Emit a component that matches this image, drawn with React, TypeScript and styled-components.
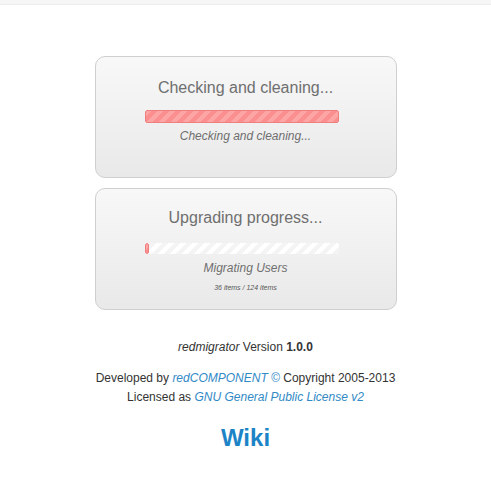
import React from "react";
import styled, { createGlobalStyle } from "styled-components";

const GlobalStyle = createGlobalStyle`
  body {
    margin: 0;
    background: #fff;
    font-family: "Liberation Sans", Arial, sans-serif;
  }
`;

const TopStrip = styled.div`
  height: 4px;
  background: #f6f6f6;
  border-bottom: 1px solid #ececec;
`;

const Page = styled.div`
  display: flex;
  flex-direction: column;
  align-items: center;
  padding-top: 51px;
`;

const Panel = styled.div<{ $top: number }>`
  box-sizing: border-box;
  width: 302px;
  height: 122px;
  margin-bottom: 10px;
  padding-top: ${(p) => p.$top}px;
  border: 1px solid #cfcfcf;
  border-radius: 10px;
  background: linear-gradient(to bottom, #f8f8f8, #e9e9e9);
  display: flex;
  flex-direction: column;
  align-items: center;
`;

const Title = styled.div`
  font-size: 16px;
  line-height: 20px;
  color: #6f6f6f;
`;

const Bar = styled.div<{ $h: number; $gap: number }>`
  box-sizing: border-box;
  width: 194px;
  height: ${(p) => p.$h}px;
  margin-top: ${(p) => p.$gap}px;
  margin-right: 7px;
  border-radius: 2px;
  background-color: #f4f4f4;
  background-image: linear-gradient(
    135deg,
    #ffffff 25%,
    transparent 25%,
    transparent 50%,
    #ffffff 50%,
    #ffffff 75%,
    transparent 75%,
    transparent
  );
  background-size: 12px 12px;
  display: flex;
  overflow: hidden;
`;

const Fill = styled.div`
  height: 100%;
  box-sizing: border-box;
  border: 1px solid #ef7f7f;
  border-radius: 2px;
  background-color: #fb8f8f;
  background-image: linear-gradient(
    135deg,
    rgba(255, 255, 255, 0.2) 25%,
    transparent 25%,
    transparent 50%,
    rgba(255, 255, 255, 0.2) 50%,
    rgba(255, 255, 255, 0.2) 75%,
    transparent 75%,
    transparent
  );
  background-size: 12px 12px;
`;

const Status = styled.div<{ $gap: number }>`
  margin-top: ${(p) => p.$gap}px;
  font-size: 12px;
  line-height: 16px;
  font-style: italic;
  color: #6f6f6f;
`;

const Count = styled.div`
  margin-top: 8px;
  font-size: 7px;
  line-height: 8px;
  font-style: italic;
  color: #555;
`;

const Footer = styled.div`
  margin-top: 18px;
  display: flex;
  flex-direction: column;
  align-items: center;
  font-size: 12px;
  color: #333;
`;

const Line = styled.div<{ $gap: number }>`
  margin-top: ${(p) => p.$gap}px;
  line-height: 19px;
`;

const Link = styled.a`
  color: #3189c6;
  font-style: italic;
  text-decoration: none;
`;

const Wiki = styled.a`
  margin-top: 17px;
  font-size: 24px;
  font-weight: bold;
  line-height: 28px;
  color: #1c84c6;
  text-decoration: none;
`;

export default function App() {
  const done = 36;
  const total = 124;
  return (
    <>
      <GlobalStyle />
      <TopStrip />
      <Page>
        <Panel $top={21}>
          <Title>Checking and cleaning...</Title>
          <Bar $h={13} $gap={12}>
            <Fill style={{ width: "100%" }} />
          </Bar>
          <Status $gap={5}>Checking and cleaning...</Status>
        </Panel>
        <Panel $top={19}>
          <Title>Upgrading progress...</Title>
          <Bar $h={11} $gap={15}>
            <Fill style={{ width: 4 }} />
          </Bar>
          <Status $gap={6}>Migrating Users</Status>
          <Count>
            {done} items / {total} items
          </Count>
        </Panel>
        <Footer>
          <Line $gap={0}>
            <i>redmigrator</i> Version <b>1.0.0</b>
          </Line>
          <Line $gap={12}>
            Developed by <Link href="#">redCOMPONENT ©</Link> Copyright 2005-2013
          </Line>
          <Line $gap={0}>
            Licensed as <Link href="#">GNU General Public License v2</Link>
          </Line>
          <Wiki href="#">Wiki</Wiki>
        </Footer>
      </Page>
    </>
  );
}
